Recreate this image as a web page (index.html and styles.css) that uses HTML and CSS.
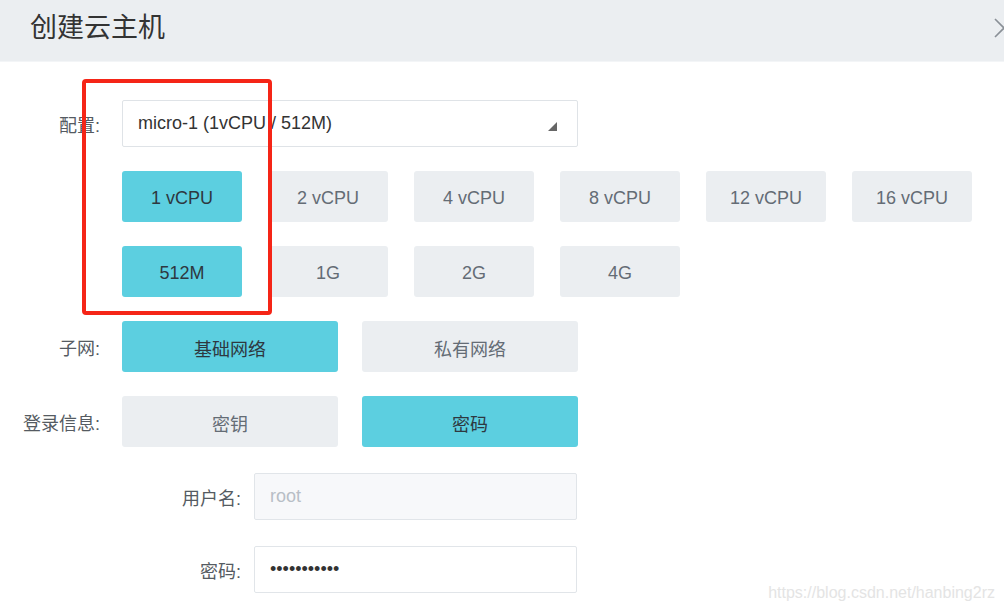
FILE: index.html
```html
<!DOCTYPE html>
<html lang="zh-CN">

<head>
    <meta charset="UTF-8">
    <meta name="viewport" content="width=device-width, initial-scale=1.0">
    <title>创建云主机</title>
    <link rel="stylesheet" href="styles.css">
</head>

<body>
    <div class="dialog">
        <!-- Header -->
        <div class="dialog-header">
            <h2>创建云主机</h2>
            <svg class="close" width="20" height="20" viewBox="0 0 20 20">
                <path d="M1 1 L19 19 M19 1 L1 19" stroke="#8a9097" stroke-width="1.6" fill="none"/>
            </svg>
        </div>

        <!-- Form -->
        <form class="dialog-body">
            <label class="row-label">配置:</label>
            <div class="select">
                <span>micro-1 (1vCPU / 512M)</span>
                <svg class="caret" width="9" height="9" viewBox="0 0 9 9">
                    <polygon points="9,0 9,9 0,9" fill="#666"/>
                </svg>
            </div>

            <span></span>
            <div class="options options-6">
                <button type="button" class="opt active">1 vCPU</button>
                <button type="button" class="opt">2 vCPU</button>
                <button type="button" class="opt">4 vCPU</button>
                <button type="button" class="opt">8 vCPU</button>
                <button type="button" class="opt">12 vCPU</button>
                <button type="button" class="opt">16 vCPU</button>
            </div>

            <span></span>
            <div class="options options-6">
                <button type="button" class="opt active">512M</button>
                <button type="button" class="opt">1G</button>
                <button type="button" class="opt">2G</button>
                <button type="button" class="opt">4G</button>
            </div>

            <label class="row-label">子网:</label>
            <div class="options options-2">
                <button type="button" class="opt active">基础网络</button>
                <button type="button" class="opt">私有网络</button>
            </div>

            <label class="row-label">登录信息:</label>
            <div class="options options-2">
                <button type="button" class="opt">密钥</button>
                <button type="button" class="opt active">密码</button>
            </div>

            <span></span>
            <div class="sub-row">
                <label class="row-label" for="username">用户名:</label>
                <input type="text" id="username" class="text-input disabled" placeholder="root" readonly>
            </div>

            <span></span>
            <div class="sub-row">
                <label class="row-label" for="password">密码:</label>
                <input type="password" id="password" class="text-input" value="12345678901">
            </div>
        </form>

        <!-- annotation -->
        <div class="highlight"></div>
        <div class="watermark">https://blog.csdn.net/hanbing2rz</div>
    </div>
</body>

</html>
```

FILE: styles.css
```css
/* Global styles */
body {
    margin: 0;
    padding: 0;
    background-color: #ffffff;
    font-family: "Liberation Sans", "Noto Sans CJK SC", sans-serif;
    color: #333;
}

.dialog {
    position: relative;
    width: 1004px;
    height: 611px;
    overflow: hidden;
}

.dialog-header {
    display: flex;
    justify-content: space-between;
    align-items: center;
    height: 61px;
    padding-left: 30px;
    background-color: #ebeef1;
    border-bottom: 1px solid #f3f5f7;
    overflow: hidden;
}

.dialog-header h2 {
    margin: 0;
    font-size: 27px;
    font-weight: 400;
    color: #333;
    margin-top: -10px;
}

.close {
    margin-right: -10px;
    margin-top: -6px;
}

.dialog-body {
    display: grid;
    grid-template-columns: 100px 1fr;
    column-gap: 22px;
    row-gap: 24px;
    align-items: center;
    padding-top: 38px;
}

.row-label {
    text-align: right;
    font-size: 18px;
    color: #555b62;
}

.select {
    display: flex;
    justify-content: space-between;
    align-items: center;
    box-sizing: border-box;
    width: 456px;
    height: 47px;
    padding: 0 20px 0 15px;
    border: 1px solid #dfe3e7;
    border-radius: 2px;
    font-size: 18px;
    color: #333;
}

.caret {
    margin-top: 6px;
}

.options {
    display: grid;
    column-gap: 26px;
}

.options-6 {
    grid-template-columns: repeat(6, 120px);
}

.options-2 {
    grid-template-columns: repeat(2, 216px);
    column-gap: 24px;
}

.opt {
    height: 51px;
    border: none;
    border-radius: 3px;
    background-color: #ebeef1;
    color: #646c75;
    font-family: inherit;
    font-size: 18px;
    padding: 3px 0 0;
}

.opt.active {
    background-color: #5ccfe0;
    color: #2e3840;
}

.sub-row {
    display: grid;
    grid-template-columns: 119px 323px;
    column-gap: 13px;
    align-items: center;
    margin-top: 2px;
}

.text-input {
    box-sizing: border-box;
    height: 47px;
    padding: 0 15px;
    border: 1px solid #e1e5e9;
    border-radius: 2px;
    font-family: inherit;
    font-size: 18px;
    color: #333;
    outline: none;
}

.text-input.disabled {
    background-color: #f7f8fa;
}

.text-input::placeholder {
    color: #b8bec6;
}

/* red annotation box */
.highlight {
    position: absolute;
    left: 82px;
    top: 79px;
    width: 182px;
    height: 228px;
    border: 4px solid #f52517;
    border-radius: 4px;
}

.watermark {
    position: absolute;
    right: 9px;
    bottom: 9px;
    font-size: 16px;
    color: #e4e4e4;
}
```
